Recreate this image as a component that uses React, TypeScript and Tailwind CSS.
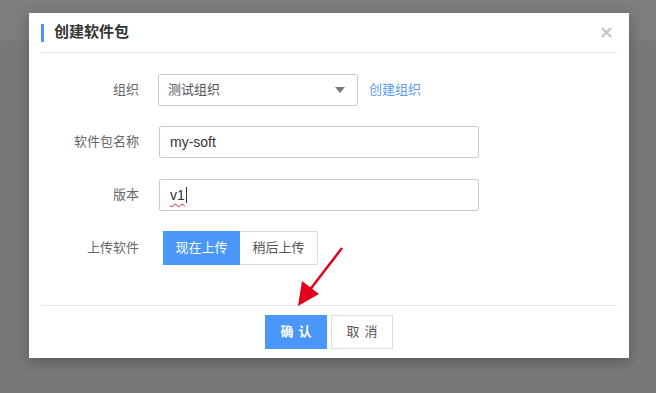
import React from "react";

const font = { fontFamily: '"Liberation Sans", "Noto Sans CJK SC", sans-serif' };

export default function App() {
  return (
    <div className="relative h-[393px] w-[656px] overflow-hidden bg-[#787878]" style={font}>
      <div className="h-[41px] bg-[#7d7d7d]" />
      <div className="absolute left-[29px] top-[13px] flex h-[345px] w-[600px] flex-col bg-white shadow-[0_4px_12px_rgba(0,0,0,0.25)]">
        {/* header */}
        <div className="mx-3 flex h-[40px] shrink-0 items-center border-b border-[#e5e5e5]">
          <div className="h-[18px] w-[3px] bg-[#4b97f9]" />
          <div className="ml-[10px] text-[15px] font-bold text-[#333]">创建软件包</div>
          <div className="ml-auto mr-[5px] flex h-[12px] w-[12px] items-center justify-center">
            <svg width="11" height="11" viewBox="0 0 11 11">
              <path d="M1 1 L10 10 M10 1 L1 10" stroke="#c4c4c4" strokeWidth="2.4" />
            </svg>
          </div>
        </div>
        {/* body */}
        <div className="mx-3 flex flex-1 flex-col border-b border-[#e5e5e5] pt-[21px]">
          <div className="flex items-center">
            <div className="w-[98px] shrink-0 text-right text-[13px] text-[#666]">组织</div>
            <div className="ml-[19px] flex h-[32px] w-[200px] items-center rounded-[2px] border border-[#ccc] pl-[9px] pr-[12px] text-[13px] text-[#555]">
              <span>测试组织</span>
              <svg className="ml-auto" width="10" height="6" viewBox="0 0 10 6">
                <path d="M0 0 L10 0 L5 6 Z" fill="#777" />
              </svg>
            </div>
            <span className="ml-[11px] text-[13px] text-[#5a9bef]">创建组织</span>
          </div>
          <div className="mt-[20px] flex items-center">
            <div className="w-[98px] shrink-0 text-right text-[13px] text-[#666]">软件包名称</div>
            <div className="ml-[20px] flex h-[32px] w-[320px] items-center rounded-[2px] border border-[#ccc] pl-[10px] text-[14px] text-[#333]">
              my-soft
            </div>
          </div>
          <div className="mt-[21px] flex items-center">
            <div className="w-[98px] shrink-0 text-right text-[13px] text-[#666]">版本</div>
            <div className="ml-[20px] flex h-[32px] w-[320px] items-center rounded-[2px] border border-[#ccc] pl-[10px] text-[14px] text-[#333]">
              <span className="underline decoration-wavy decoration-[#e02020] decoration-1 underline-offset-[3px]">v1</span>
              <span className="ml-[1px] h-[16px] w-[1px] bg-[#333]" />
            </div>
          </div>
          <div className="mt-[20px] flex items-center">
            <div className="w-[98px] shrink-0 text-right text-[13px] text-[#666]">上传软件</div>
            <div className="ml-[24px] flex h-[34px]">
              <div className="flex w-[77px] items-center justify-center bg-[#4b97f9] text-[13px] text-white">现在上传</div>
              <div className="flex w-[78px] items-center justify-center border border-l-0 border-[#ddd] text-[13px] text-[#555]">稍后上传</div>
            </div>
          </div>
        </div>
        {/* footer */}
        <div className="flex h-[52px] shrink-0 justify-center gap-[4px] pt-[9px]">
          <div className="flex h-[34px] w-[62px] items-center justify-center bg-[#4b97f9] text-[13px] font-bold tracking-[5px] text-white">
            <span className="pl-[5px]">确认</span>
          </div>
          <div className="flex h-[34px] w-[62px] items-center justify-center border border-[#ddd] text-[13px] tracking-[5px] text-[#555]">
            <span className="pl-[5px]">取消</span>
          </div>
        </div>
      </div>
      {/* red arrow annotation */}
      <svg className="absolute left-0 top-0" width="656" height="393" viewBox="0 0 656 393">
        <line x1="342" y1="248" x2="309" y2="291" stroke="#e3001b" strokeWidth="2.5" />
        <polygon points="298,306 302,281 319,294" fill="#e3001b" />
      </svg>
    </div>
  );
}
